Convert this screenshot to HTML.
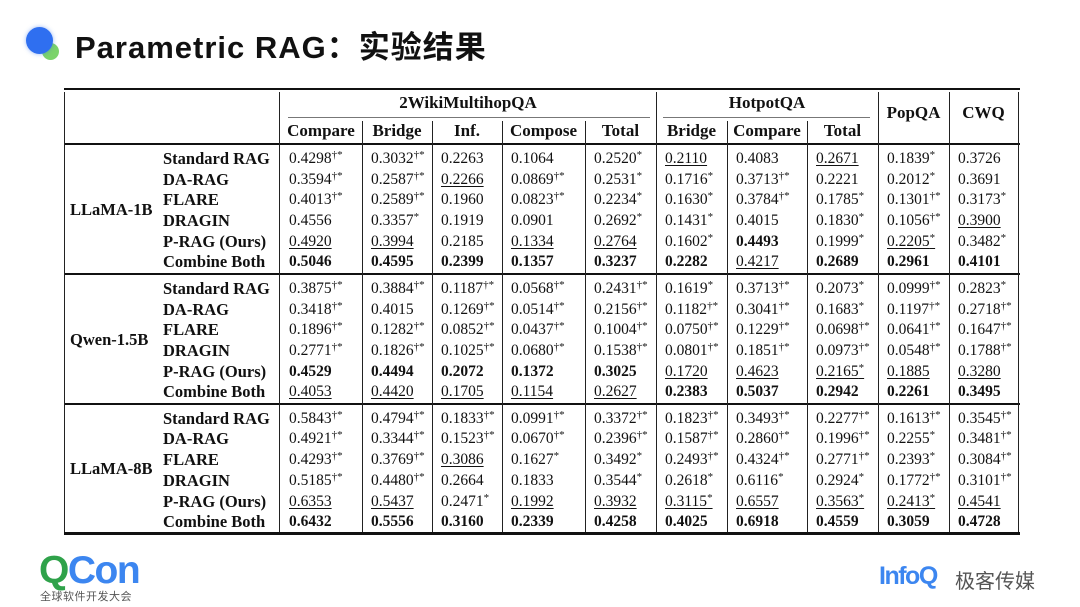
<!DOCTYPE html>
<html><head><meta charset="utf-8"><style>
*{margin:0;padding:0;box-sizing:border-box}
body{width:1080px;height:607px;background:#fff;position:relative;overflow:hidden;font-family:"Liberation Serif",serif;color:#111}
.t{position:absolute;left:75px;top:22px;font-family:"Liberation Sans","Noto Sans CJK SC",sans-serif;font-size:31px;font-weight:bold;color:#111;letter-spacing:1px}
.c1{position:absolute;left:26px;top:27px;width:27px;height:27px;border-radius:50%;background:#2f6ff0;box-shadow:0 0 4px rgba(47,111,240,.5)}
.c2{position:absolute;left:42px;top:43px;width:17px;height:17px;border-radius:50%;background:#7bd36a;z-index:-1}
.h{position:absolute;background:#111}
.v{position:absolute;width:1px;background:#222}
.r{position:absolute;left:163px;height:21px;line-height:21px;font-size:15.5px;white-space:nowrap;display:flex}
.r b{width:117px;font-size:16.5px}
.r i{font-style:normal;padding-left:9px;display:inline-block}
.r i:nth-of-type(1){width:82px}.r i:nth-of-type(2){width:70px}.r i:nth-of-type(3){width:70px}.r i:nth-of-type(4){width:83px}.r i:nth-of-type(5){width:71px}.r i:nth-of-type(6){width:71px}.r i:nth-of-type(7){width:80px}.r i:nth-of-type(8){width:71px}.r i:nth-of-type(9){width:71px}.r i:nth-of-type(10){width:69px}
.r i.b{font-weight:bold}
.u{text-decoration:underline;text-underline-offset:2px}
sup{font-size:11px;line-height:0;vertical-align:5px}
.g{position:absolute;left:70px;font-weight:bold;font-size:16.5px}
.hd{position:absolute;font-weight:bold;font-size:17px;text-align:center}
</style></head><body>
<div class="c2"></div><div class="c1"></div>
<div class="t">Parametric RAG：实验结果</div>

<div class="h" style="left:64px;top:88px;width:956px;height:2px"></div>
<div class="h" style="left:288px;top:117px;width:362px;height:1px;background:#777"></div>
<div class="h" style="left:663px;top:117px;width:207px;height:1px;background:#777"></div>
<div class="h" style="left:64px;top:143px;width:956px;height:2px"></div>
<div class="h" style="left:64px;top:273px;width:956px;height:2px"></div>
<div class="h" style="left:64px;top:403px;width:956px;height:2px"></div>
<div class="h" style="left:64px;top:532px;width:956px;height:3px"></div>

<div class="v" style="left:64px;top:92px;height:440px"></div>
<div class="v" style="left:279px;top:92px;height:440px"></div>
<div class="v" style="left:656px;top:92px;height:440px"></div>
<div class="v" style="left:878px;top:92px;height:440px"></div>
<div class="v" style="left:949px;top:92px;height:440px"></div>
<div class="v" style="left:1018px;top:92px;height:440px"></div>
<div class="v" style="left:362px;top:121px;height:411px"></div>
<div class="v" style="left:432px;top:121px;height:411px"></div>
<div class="v" style="left:502px;top:121px;height:411px"></div>
<div class="v" style="left:585px;top:121px;height:411px"></div>
<div class="v" style="left:727px;top:121px;height:411px"></div>
<div class="v" style="left:807px;top:121px;height:411px"></div>

<div class="hd" style="left:280px;width:376px;top:93px">2WikiMultihopQA</div>
<div class="hd" style="left:656px;width:222px;top:93px">HotpotQA</div>
<div class="hd" style="left:878px;width:71px;top:103px">PopQA</div>
<div class="hd" style="left:949px;width:69px;top:103px">CWQ</div>
<div class="hd" style="left:280px;width:82px;top:121px">Compare</div>
<div class="hd" style="left:362px;width:70px;top:121px">Bridge</div>
<div class="hd" style="left:432px;width:70px;top:121px">Inf.</div>
<div class="hd" style="left:502px;width:83px;top:121px">Compose</div>
<div class="hd" style="left:585px;width:71px;top:121px">Total</div>
<div class="hd" style="left:656px;width:71px;top:121px">Bridge</div>
<div class="hd" style="left:727px;width:80px;top:121px">Compare</div>
<div class="hd" style="left:807px;width:71px;top:121px">Total</div>

<div class="g" style="top:200px">LLaMA-1B</div>
<div class="g" style="top:330px">Qwen-1.5B</div>
<div class="g" style="top:459px">LLaMA-8B</div>

<div class="r" style="top:148px"><b>Standard RAG</b><i>0.4298<sup>†*</sup></i><i>0.3032<sup>†*</sup></i><i>0.2263</i><i>0.1064</i><i>0.2520<sup>*</sup></i><i><span class="u">0.2110</span></i><i>0.4083</i><i><span class="u">0.2671</span></i><i>0.1839<sup>*</sup></i><i>0.3726</i></div>
<div class="r" style="top:169px"><b>DA-RAG</b><i>0.3594<sup>†*</sup></i><i>0.2587<sup>†*</sup></i><i><span class="u">0.2266</span></i><i>0.0869<sup>†*</sup></i><i>0.2531<sup>*</sup></i><i>0.1716<sup>*</sup></i><i>0.3713<sup>†*</sup></i><i>0.2221</i><i>0.2012<sup>*</sup></i><i>0.3691</i></div>
<div class="r" style="top:189px"><b>FLARE</b><i>0.4013<sup>†*</sup></i><i>0.2589<sup>†*</sup></i><i>0.1960</i><i>0.0823<sup>†*</sup></i><i>0.2234<sup>*</sup></i><i>0.1630<sup>*</sup></i><i>0.3784<sup>†*</sup></i><i>0.1785<sup>*</sup></i><i>0.1301<sup>†*</sup></i><i>0.3173<sup>*</sup></i></div>
<div class="r" style="top:210px"><b>DRAGIN</b><i>0.4556</i><i>0.3357<sup>*</sup></i><i>0.1919</i><i>0.0901</i><i>0.2692<sup>*</sup></i><i>0.1431<sup>*</sup></i><i>0.4015</i><i>0.1830<sup>*</sup></i><i>0.1056<sup>†*</sup></i><i><span class="u">0.3900</span></i></div>
<div class="r" style="top:231px"><b>P-RAG (Ours)</b><i><span class="u">0.4920</span></i><i><span class="u">0.3994</span></i><i>0.2185</i><i><span class="u">0.1334</span></i><i><span class="u">0.2764</span></i><i>0.1602<sup>*</sup></i><i class="b">0.4493</i><i>0.1999<sup>*</sup></i><i><span class="u">0.2205<sup>*</sup></span></i><i>0.3482<sup>*</sup></i></div>
<div class="r" style="top:251px"><b>Combine Both</b><i class="b">0.5046</i><i class="b">0.4595</i><i class="b">0.2399</i><i class="b">0.1357</i><i class="b">0.3237</i><i class="b">0.2282</i><i><span class="u">0.4217</span></i><i class="b">0.2689</i><i class="b">0.2961</i><i class="b">0.4101</i></div>

<div class="r" style="top:278px"><b>Standard RAG</b><i>0.3875<sup>†*</sup></i><i>0.3884<sup>†*</sup></i><i>0.1187<sup>†*</sup></i><i>0.0568<sup>†*</sup></i><i>0.2431<sup>†*</sup></i><i>0.1619<sup>*</sup></i><i>0.3713<sup>†*</sup></i><i>0.2073<sup>*</sup></i><i>0.0999<sup>†*</sup></i><i>0.2823<sup>*</sup></i></div>
<div class="r" style="top:299px"><b>DA-RAG</b><i>0.3418<sup>†*</sup></i><i>0.4015</i><i>0.1269<sup>†*</sup></i><i>0.0514<sup>†*</sup></i><i>0.2156<sup>†*</sup></i><i>0.1182<sup>†*</sup></i><i>0.3041<sup>†*</sup></i><i>0.1683<sup>*</sup></i><i>0.1197<sup>†*</sup></i><i>0.2718<sup>†*</sup></i></div>
<div class="r" style="top:319px"><b>FLARE</b><i>0.1896<sup>†*</sup></i><i>0.1282<sup>†*</sup></i><i>0.0852<sup>†*</sup></i><i>0.0437<sup>†*</sup></i><i>0.1004<sup>†*</sup></i><i>0.0750<sup>†*</sup></i><i>0.1229<sup>†*</sup></i><i>0.0698<sup>†*</sup></i><i>0.0641<sup>†*</sup></i><i>0.1647<sup>†*</sup></i></div>
<div class="r" style="top:340px"><b>DRAGIN</b><i>0.2771<sup>†*</sup></i><i>0.1826<sup>†*</sup></i><i>0.1025<sup>†*</sup></i><i>0.0680<sup>†*</sup></i><i>0.1538<sup>†*</sup></i><i>0.0801<sup>†*</sup></i><i>0.1851<sup>†*</sup></i><i>0.0973<sup>†*</sup></i><i>0.0548<sup>†*</sup></i><i>0.1788<sup>†*</sup></i></div>
<div class="r" style="top:361px"><b>P-RAG (Ours)</b><i class="b">0.4529</i><i class="b">0.4494</i><i class="b">0.2072</i><i class="b">0.1372</i><i class="b">0.3025</i><i><span class="u">0.1720</span></i><i><span class="u">0.4623</span></i><i><span class="u">0.2165<sup>*</sup></span></i><i><span class="u">0.1885</span></i><i><span class="u">0.3280</span></i></div>
<div class="r" style="top:381px"><b>Combine Both</b><i><span class="u">0.4053</span></i><i><span class="u">0.4420</span></i><i><span class="u">0.1705</span></i><i><span class="u">0.1154</span></i><i><span class="u">0.2627</span></i><i class="b">0.2383</i><i class="b">0.5037</i><i class="b">0.2942</i><i class="b">0.2261</i><i class="b">0.3495</i></div>

<div class="r" style="top:408px"><b>Standard RAG</b><i>0.5843<sup>†*</sup></i><i>0.4794<sup>†*</sup></i><i>0.1833<sup>†*</sup></i><i>0.0991<sup>†*</sup></i><i>0.3372<sup>†*</sup></i><i>0.1823<sup>†*</sup></i><i>0.3493<sup>†*</sup></i><i>0.2277<sup>†*</sup></i><i>0.1613<sup>†*</sup></i><i>0.3545<sup>†*</sup></i></div>
<div class="r" style="top:428px"><b>DA-RAG</b><i>0.4921<sup>†*</sup></i><i>0.3344<sup>†*</sup></i><i>0.1523<sup>†*</sup></i><i>0.0670<sup>†*</sup></i><i>0.2396<sup>†*</sup></i><i>0.1587<sup>†*</sup></i><i>0.2860<sup>†*</sup></i><i>0.1996<sup>†*</sup></i><i>0.2255<sup>*</sup></i><i>0.3481<sup>†*</sup></i></div>
<div class="r" style="top:449px"><b>FLARE</b><i>0.4293<sup>†*</sup></i><i>0.3769<sup>†*</sup></i><i><span class="u">0.3086</span></i><i>0.1627<sup>*</sup></i><i>0.3492<sup>*</sup></i><i>0.2493<sup>†*</sup></i><i>0.4324<sup>†*</sup></i><i>0.2771<sup>†*</sup></i><i>0.2393<sup>*</sup></i><i>0.3084<sup>†*</sup></i></div>
<div class="r" style="top:470px"><b>DRAGIN</b><i>0.5185<sup>†*</sup></i><i>0.4480<sup>†*</sup></i><i>0.2664</i><i>0.1833</i><i>0.3544<sup>*</sup></i><i>0.2618<sup>*</sup></i><i>0.6116<sup>*</sup></i><i>0.2924<sup>*</sup></i><i>0.1772<sup>†*</sup></i><i>0.3101<sup>†*</sup></i></div>
<div class="r" style="top:491px"><b>P-RAG (Ours)</b><i><span class="u">0.6353</span></i><i><span class="u">0.5437</span></i><i>0.2471<sup>*</sup></i><i><span class="u">0.1992</span></i><i><span class="u">0.3932</span></i><i><span class="u">0.3115<sup>*</sup></span></i><i><span class="u">0.6557</span></i><i><span class="u">0.3563<sup>*</sup></span></i><i><span class="u">0.2413<sup>*</sup></span></i><i><span class="u">0.4541</span></i></div>
<div class="r" style="top:511px"><b>Combine Both</b><i class="b">0.6432</i><i class="b">0.5556</i><i class="b">0.3160</i><i class="b">0.2339</i><i class="b">0.4258</i><i class="b">0.4025</i><i class="b">0.6918</i><i class="b">0.4559</i><i class="b">0.3059</i><i class="b">0.4728</i></div>

<div style="position:absolute;left:39px;top:550px;font-family:'Liberation Sans',sans-serif;font-weight:bold;font-size:39px;letter-spacing:-1.5px;line-height:42px"><span style="color:#2fa24a">Q</span><span style="color:#3c86f0">Con</span></div>
<div style="position:absolute;left:40px;top:588px;font-family:'Liberation Sans','Noto Sans CJK SC',sans-serif;font-size:11px;color:#555;letter-spacing:0.5px">全球软件开发大会</div>
<div style="position:absolute;left:879px;top:562px;font-family:'Liberation Sans',sans-serif;font-weight:bold;font-size:25px;color:#3c86f0;letter-spacing:-1.5px">InfoQ</div>
<div style="position:absolute;left:955px;top:565px;font-family:'Noto Sans CJK SC',sans-serif;font-size:20px;color:#555">极客传媒</div>
</body></html>
